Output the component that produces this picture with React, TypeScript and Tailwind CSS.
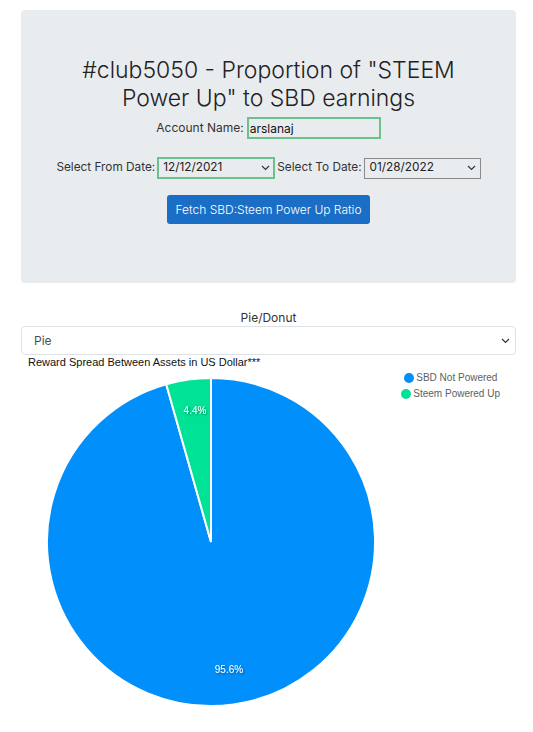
import React, { useState } from "react";

const CX = 190;
const CY = 173;
const R = 164;

const point = (deg: number) => {
  const rad = (deg * Math.PI) / 180;
  return [CX + R * Math.sin(rad), CY - R * Math.cos(rad)];
};

const Chevron: React.FC = () => (
  <svg width="9" height="6" viewBox="0 0 9 6" className="shrink-0">
    <path d="M1 1l3.5 3.5L8 1" fill="none" stroke="#333" strokeWidth="1.2" />
  </svg>
);

const App: React.FC = () => {
  const [account, setAccount] = useState("arslanaj");
  const sbd = 95.6;
  const split = (sbd / 100) * 360;
  const [sx, sy] = point(split);

  return (
    <div className="min-h-[732px] bg-white font-['Inter',sans-serif] text-[#333]">
      {/* Header panel */}
      <div className="ml-[21px] w-[495px] pt-[10px]">
        <div className="flex h-[273px] flex-col items-center rounded bg-[#e9ecef] pt-[46px]">
          <h1 className="text-center text-[23px] leading-[28px] font-light text-[#222]">
            #club5050 - Proportion of "STEEM
            <br />
            Power Up" to SBD earnings
          </h1>
          <div className="mt-[5px] flex items-center gap-[3px] text-[12px]">
            <span>Account Name:</span>
            <input
              value={account}
              onChange={(e) => setAccount(e.target.value)}
              className="h-[22px] w-[134px] border-2 border-[#6cc08c] bg-transparent px-[1px] text-[12px] text-[#111] outline-none"
            />
          </div>
          <div className="mt-[18px] flex items-center gap-[2px] text-[11.8px]">
            <span>Select From Date:</span>
            <div className="flex h-[22px] w-[118px] items-center justify-between border-2 border-[#6cc08c] pl-[4px] pr-[3px] text-[#222]">
              <span>12/12/2021</span>
              <Chevron />
            </div>
            <span>Select To Date:</span>
            <div className="flex h-[21px] w-[117px] items-center justify-between border border-[#8a8a8a] pl-[5px] pr-[4px] text-[#222]">
              <span>01/28/2022</span>
              <Chevron />
            </div>
          </div>
          <button className="mt-[16px] h-[29px] w-[203px] rounded-[3px] bg-[#1b6ec5] text-[12px] font-light text-white">
            Fetch SBD:Steem Power Up Ratio
          </button>
        </div>

        {/* Chart type */}
        <div className="mt-[27px] text-center text-[12px] leading-[16px] text-[#333]">Pie/Donut</div>
        <div className="flex h-[29px] items-center justify-between rounded border border-[#dee2e6] pl-[12px] pr-[5px] text-[12px] text-[#495057]">
          <span>Pie</span>
          <Chevron />
        </div>

        {/* Chart */}
        <div className="relative">
          <div className="pl-[7px] font-['Liberation_Sans',Arial,sans-serif] text-[11px] leading-[14px] text-[#111]">
            Reward Spread Between Assets in US Dollar***
          </div>
          <div className="absolute right-[16px] top-[17px] flex flex-col gap-[4px] font-['Liberation_Sans',Arial,sans-serif] text-[10px] leading-[12px] text-[#5a5f61]">
            <div className="flex items-center gap-[2px] pl-[3px]">
              <span className="h-[10px] w-[10px] rounded-full bg-[#008ffb]" />
              <span>SBD Not Powered</span>
            </div>
            <div className="flex items-center gap-[2px]">
              <span className="h-[10px] w-[10px] rounded-full bg-[#00e396]" />
              <span>Steem Powered Up</span>
            </div>
          </div>
          <svg width="495" height="360" className="block">
            <defs>
              <filter id="ds" x="-20%" y="-20%" width="140%" height="140%">
                <feDropShadow dx="1" dy="1" stdDeviation="1" floodColor="#000" floodOpacity="0.45" />
              </filter>
            </defs>
            <path
              d={`M${CX} ${CY} L${CX} ${CY - R} A${R} ${R} 0 1 1 ${sx} ${sy} Z`}
              fill="#008ffb"
              stroke="#fff"
              strokeWidth="2"
            />
            <path
              d={`M${CX} ${CY} L${sx} ${sy} A${R} ${R} 0 0 1 ${CX} ${CY - R} Z`}
              fill="#00e396"
              stroke="#fff"
              strokeWidth="2"
            />
            <g
              fill="#fff"
              fontSize="10"
              fontFamily="Liberation Sans, Arial, sans-serif"
              textAnchor="middle"
              filter="url(#ds)"
            >
              <text x="174" y="45">4.4%</text>
              <text x="208" y="304">95.6%</text>
            </g>
          </svg>
        </div>
      </div>
    </div>
  );
};

export default App;
